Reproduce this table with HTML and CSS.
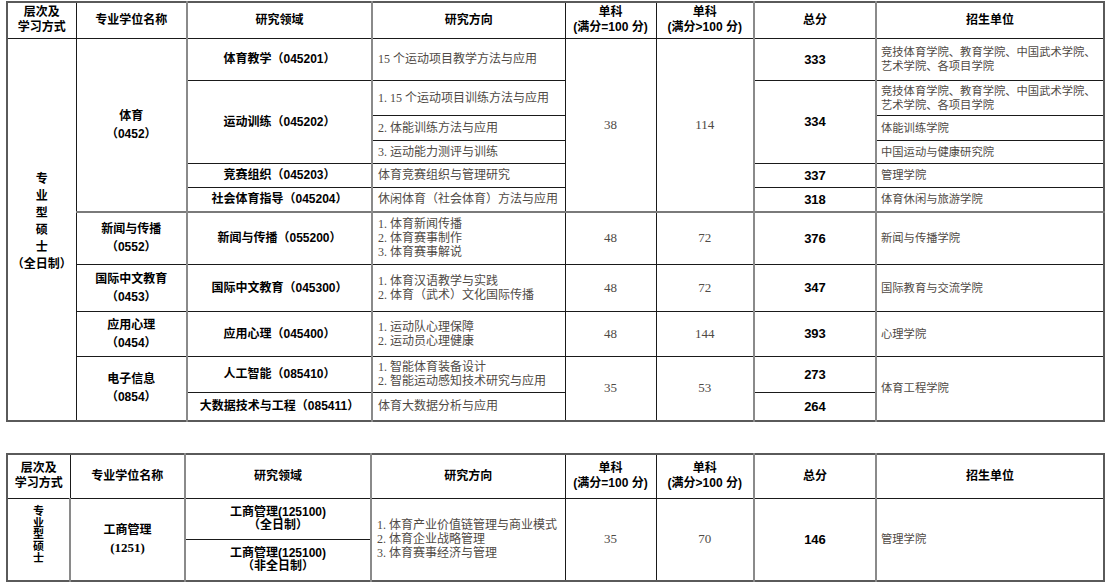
FILE: index.html
```html
<!DOCTYPE html>
<html lang="zh">
<head>
<meta charset="utf-8">
<title>专业型硕士复试分数线</title>
<link rel="stylesheet" href="styles.css">
</head>
<body>
<div class="page">
<table class="grid grid-a">
  <colgroup>
    <col class="w1a"><col class="w2a"><col class="w3a"><col class="w4a">
    <col class="w5"><col class="w6"><col class="w7"><col class="w8">
  </colgroup>
  <tr class="hrow-a">
    <th class="hd">层次及<br>学习方式</th>
    <th class="hd">专业学位名称</th>
    <th class="hd g">研究领域</th>
    <th class="hd g">研究方向</th>
    <th class="hd">单科<br>(满分=100 分)</th>
    <th class="hd">单科<br>(满分&gt;100 分)</th>
    <th class="hd g">总分</th>
    <th class="hd g">招生单位</th>
  </tr>
  <tr class="r1">
    <td class="v va" rowspan="11">专<br>业<br>型<br>硕<br>士<br>（全日制）</td>
    <td class="m" rowspan="6">体育<br>（0452）</td>
    <td class="f g">体育教学（045201）</td>
    <td class="d g">15 个运动项目教学方法与应用</td>
    <td class="n" rowspan="6">38</td>
    <td class="n" rowspan="6">114</td>
    <td class="t g">333</td>
    <td class="u g">竞技体育学院、教育学院、中国武术学院、<br>艺术学院、各项目学院</td>
  </tr>
  <tr class="r2">
    <td class="f g" rowspan="3">运动训练（045202）</td>
    <td class="d g">1. 15 个运动项目训练方法与应用</td>
    <td class="t g" rowspan="3">334</td>
    <td class="u g">竞技体育学院、教育学院、中国武术学院、<br>艺术学院、各项目学院</td>
  </tr>
  <tr class="r3">
    <td class="d g">2. 体能训练方法与应用</td>
    <td class="u g">体能训练学院</td>
  </tr>
  <tr class="r4">
    <td class="d g">3. 运动能力测评与训练</td>
    <td class="u g">中国运动与健康研究院</td>
  </tr>
  <tr class="r5">
    <td class="f g">竞赛组织（045203）</td>
    <td class="d g">体育竞赛组织与管理研究</td>
    <td class="t g">337</td>
    <td class="u g">管理学院</td>
  </tr>
  <tr class="r6">
    <td class="f g">社会体育指导（045204）</td>
    <td class="d g">休闲体育（社会体育）方法与应用</td>
    <td class="t g">318</td>
    <td class="u g">体育休闲与旅游学院</td>
  </tr>
  <tr class="r7 sep">
    <td class="m">新闻与传播<br>（0552）</td>
    <td class="f g">新闻与传播（055200）</td>
    <td class="d g">1. 体育新闻传播<br>2. 体育赛事制作<br>3. 体育赛事解说</td>
    <td class="n">48</td>
    <td class="n">72</td>
    <td class="t g">376</td>
    <td class="u g">新闻与传播学院</td>
  </tr>
  <tr class="r8">
    <td class="m">国际中文教育<br>（0453）</td>
    <td class="f g">国际中文教育（045300）</td>
    <td class="d g">1. 体育汉语教学与实践<br>2. 体育（武术）文化国际传播</td>
    <td class="n">48</td>
    <td class="n">72</td>
    <td class="t g">347</td>
    <td class="u g">国际教育与交流学院</td>
  </tr>
  <tr class="r9">
    <td class="m">应用心理<br>（0454）</td>
    <td class="f g">应用心理（045400）</td>
    <td class="d g">1. 运动队心理保障<br>2. 运动员心理健康</td>
    <td class="n">48</td>
    <td class="n">144</td>
    <td class="t g">393</td>
    <td class="u g">心理学院</td>
  </tr>
  <tr class="r10">
    <td class="m" rowspan="2">电子信息<br>（0854）</td>
    <td class="f g">人工智能（085410）</td>
    <td class="d g">1. 智能体育装备设计<br>2. 智能运动感知技术研究与应用</td>
    <td class="n" rowspan="2">35</td>
    <td class="n" rowspan="2">53</td>
    <td class="t g">273</td>
    <td class="u g" rowspan="2">体育工程学院</td>
  </tr>
  <tr class="r11">
    <td class="f g">大数据技术与工程（085411）</td>
    <td class="d g">体育大数据分析与应用</td>
    <td class="t g">264</td>
  </tr>
</table>

<table class="grid grid-b">
  <colgroup>
    <col class="w1b"><col class="w2b"><col class="w3b"><col class="w4b">
    <col class="w5"><col class="w6"><col class="w7"><col class="w8">
  </colgroup>
  <tr class="hrow-b">
    <th class="hd">层次及<br>学习方式</th>
    <th class="hd">专业学位名称</th>
    <th class="hd g">研究领域</th>
    <th class="hd g">研究方向</th>
    <th class="hd">单科<br>(满分=100 分)</th>
    <th class="hd">单科<br>(满分&gt;100 分)</th>
    <th class="hd g">总分</th>
    <th class="hd g">招生单位</th>
  </tr>
  <tr class="s1">
    <td class="v vb" rowspan="2">专<br>业<br>型<br>硕<br>士</td>
    <td class="m g" rowspan="2">工商管理<br><span class="code">(1251)</span></td>
    <td class="f f2 g">工商管理(125100)<br>（全日制）</td>
    <td class="d g" rowspan="2">1. 体育产业价值链管理与商业模式<br>2. 体育企业战略管理<br>3. 体育赛事经济与管理</td>
    <td class="n" rowspan="2">35</td>
    <td class="n" rowspan="2">70</td>
    <td class="t g" rowspan="2">146</td>
    <td class="u g" rowspan="2">管理学院</td>
  </tr>
  <tr class="s2">
    <td class="f f2 g">工商管理(125100)<br>（非全日制）</td>
  </tr>
</table>
</div>
</body>
</html>
```

FILE: styles.css
```css
html, body {
  margin: 0;
  padding: 0;
  background: #ffffff;
}

.page {
  padding: 1px 0 0 6px;
}

.grid {
  border-collapse: collapse;
  table-layout: fixed;
  width: 1097px;
  border: 2px solid #5a5a5a;
  font-family: "Liberation Sans", "Noto Sans CJK SC", sans-serif;
  font-size: 12px;
  color: #000;
}

.grid-b {
  margin-top: 31px;
}

.w1a { width: 69px; }
.w2a { width: 111px; }
.w3a { width: 185px; }
.w4a { width: 193px; }
.w1b { width: 63px; }
.w2b { width: 115px; }
.w3b { width: 186px; }
.w4b { width: 194px; }
.w5 { width: 91px; }
.w6 { width: 98px; }
.w7 { width: 122px; }
.w8 { width: 228px; }

.grid th,
.grid td {
  border: 1px solid #1a1a1a;
  padding: 0;
  vertical-align: middle;
  overflow: hidden;
  white-space: nowrap;
}

.grid .g {
  border-left: 2px solid #8a8a8a;
}

.grid .hd {
  font-weight: bold;
  text-align: center;
  line-height: 15px;
  font-size: 12px;
}

.hrow-a { height: 36px; }
.hrow-b { height: 44px; }

.r1 { height: 42px; }
.r2 { height: 35px; }
.r3 { height: 25px; }
.r4 { height: 23px; }
.r5 { height: 24px; }
.r6 { height: 25px; }
.r7 { height: 52px; }
.r8 { height: 47px; }
.r9 { height: 45px; }
.r10 { height: 36px; }
.r11 { height: 29px; }

.s1 { height: 41px; }
.s2 { height: 42px; }

.grid tr.sep > td {
  border-top: 2px solid #7a7a7a;
}

.grid .v {
  font-weight: bold;
  text-align: center;
}

.grid .va {
  line-height: 17px;
  padding-bottom: 14px;
}

.grid .vb {
  font-size: 11px;
  line-height: 11.7px;
  padding-bottom: 8px;
}

.grid .m {
  font-weight: bold;
  text-align: center;
  line-height: 18px;
}

.code {
  font-family: "Liberation Serif", "Noto Sans CJK SC", serif;
  font-size: 13px;
}

.grid .f {
  font-weight: bold;
  text-align: center;
  line-height: 18px;
}

.grid .f2 {
  line-height: 13px;
}

.grid .d,
.grid .u {
  text-align: left;
  font-family: "Liberation Serif", "Noto Sans CJK SC", serif;
  color: #4f4a45;
  line-height: 14px;
}

.grid .d {
  padding-left: 5px;
}

.grid .u {
  padding-left: 4px;
  font-size: 11.3px;
}

.grid .n {
  text-align: center;
  font-family: "Liberation Serif", "Noto Sans CJK SC", serif;
  font-size: 13px;
  color: #4f4a45;
}

.grid .t {
  text-align: center;
  font-weight: bold;
  font-size: 13px;
}
```
